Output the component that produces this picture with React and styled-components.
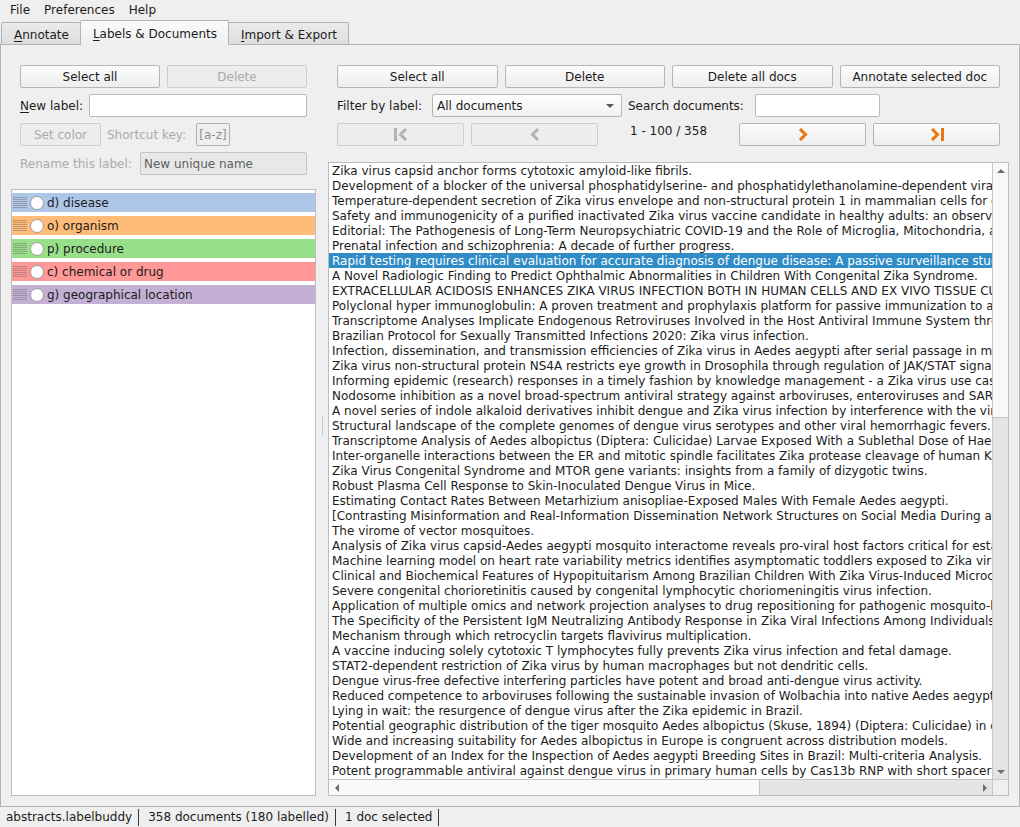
import React from "react";
import styled, { createGlobalStyle, css } from "styled-components";

const GlobalStyle = createGlobalStyle`
  html, body { margin: 0; padding: 0; width: 1020px; height: 827px; overflow: hidden; background: #efefef; }
  #root { width: 1020px; height: 827px; }
  *, *::before, *::after { box-sizing: border-box; }
`;

const Window = styled.div`
  width: 1020px;
  height: 827px;
  display: flex;
  flex-direction: column;
  font-family: "DejaVu Sans", "Liberation Sans", sans-serif;
  font-size: 12px;
  line-height: 15px;
  color: #1c1c1c;
  background: #efefef;
`;

const MenuBar = styled.div`
  height: 20px;
  display: flex;
  align-items: flex-start;
  padding-left: 3px;
`;

const MenuItem = styled.div`
  padding: 1px 7px 0;
  line-height: 18px;
`;

const TabBar = styled.div`
  height: 24px;
  display: flex;
  align-items: flex-end;
  padding-left: 1px;
`;

const Tab = styled.div`
  height: 22px;
  padding: 3px 11px 0 12px;
  display: flex;
  align-items: center;
  border: 1px solid #b3b3b3;
  border-bottom: none;
  border-radius: 2px 2px 0 0;
  background: linear-gradient(#eaeaea, #dedede);
  white-space: nowrap;
  & + & { margin-left: -1px; }
  ${(p) =>
    p.$active &&
    css`
      height: 25px;
      margin-bottom: -1px;
      padding-top: 2px;
      background: linear-gradient(#fbfbfb, #efefef);
      position: relative;
      z-index: 1;
    `}
`;

const Mnemonic = styled.span`
  text-decoration: underline;
  text-underline-offset: 2px;
`;

const Pane = styled.div`
  height: 763px;
  border: 1px solid #b3b3b3;
  display: flex;
  padding: 11px 10px 10px 10px;
  background: #efefef;
`;

const LeftColumn = styled.div`
  width: 305px;
  display: flex;
  flex-direction: column;
`;

const RightColumn = styled.div`
  flex: 1;
  min-width: 0;
  display: flex;
  flex-direction: column;
`;

const Splitter = styled.div`
  width: 12px;
  display: flex;
  align-items: center;
  justify-content: center;
`;

const SplitterDots = styled.div`
  width: 1px;
  height: 20px;
  margin-left: 1px;
  background: repeating-linear-gradient(#a8a8a8 0 1px, transparent 1px 2px);
`;

const Controls = styled.div`
  padding: 9px;
  display: flex;
  flex-direction: column;
  gap: 6px;
`;

const Row = styled.div`
  height: 23px;
  display: flex;
  align-items: center;
  gap: 6px;
`;

const GridRow = styled.div`
  height: 23px;
  display: grid;
  grid-template-columns: repeat(${(p) => p.$cols}, 1fr);
  gap: 7px;
`;

const Button = styled.button`
  height: 23px;
  margin: 0;
  padding: 1px 8px 0;
  font: inherit;
  color: ${(p) => (p.disabled ? "#a9a9a9" : "#1c1c1c")};
  border: 1px solid ${(p) => (p.disabled ? "#cdcdcd" : "#b6b6b6")};
  border-radius: 2px;
  background: ${(p) => (p.disabled ? "#ededed" : "linear-gradient(#fbfbfb, #eeeeee)")};
  display: flex;
  align-items: center;
  justify-content: center;
  white-space: nowrap;
  width: ${(p) => (p.$w ? `${p.$w}px` : "auto")};
`;

const IconButton = styled(Button)`
  padding-top: 0;
`;

const Label = styled.span`
  flex: none;
  white-space: nowrap;
  padding-top: 1px;
  width: ${(p) => (p.$w ? `${p.$w}px` : "auto")};
  color: ${(p) => (p.$dim ? "#ababab" : "#1c1c1c")};
`;

const Input = styled.div`
  height: 23px;
  flex: ${(p) => (p.$w ? "none" : "1")};
  width: ${(p) => (p.$w ? `${p.$w}px` : "auto")};
  border: 1px solid ${(p) => (p.$disabled ? "#c4c4c4" : "#b9b9b9")};
  border-radius: 2px;
  background: ${(p) => (p.$disabled ? "#e8e8e8" : "#ffffff")};
  color: ${(p) => (p.$disabled ? "#5e5e5e" : "#1c1c1c")};
  padding: 1px 3px 0;
  display: flex;
  align-items: center;
  white-space: nowrap;
  overflow: hidden;
`;

const KeyBox = styled.div`
  height: 23px;
  width: 34px;
  flex: none;
  border: 1px solid #b0b0b0;
  border-radius: 2px;
  background: #efefef;
  color: #8e8e8e;
  padding-top: 1px;
  display: flex;
  align-items: center;
  justify-content: center;
`;

const Combo = styled.div`
  height: 23px;
  width: 190px;
  flex: none;
  border: 1px solid #b6b6b6;
  border-radius: 2px;
  background: linear-gradient(#fdfdfd, #f1f1f1);
  padding: 1px 7px 0 4px;
  display: flex;
  align-items: center;
  justify-content: space-between;
`;

const ComboArrow = styled.span`
  width: 0;
  height: 0;
  border-left: 4px solid transparent;
  border-right: 4px solid transparent;
  border-top: 4px solid #5a5a5a;
`;

const PageInfo = styled.div`
  text-align: center;
  align-self: start;
  padding-top: 1px;
`;

const LabelList = styled.div`
  margin-top: 5px;
  flex: 1;
  background: #ffffff;
  border: 1px solid #bdbdbd;
  padding-top: 3px;
  display: flex;
  flex-direction: column;
  gap: 4px;
`;

const LabelItem = styled.div`
  height: 19px;
  display: flex;
  align-items: center;
  background: ${(p) => p.$color};
  padding-left: 1px;
`;

const Handle = styled.svg`
  flex: none;
  width: 14px;
  height: 11px;
  display: block;
`;

const Radio = styled.span`
  flex: none;
  width: 14px;
  height: 14px;
  margin-left: 3px;
  border-radius: 50%;
  border: 1px solid #9c9c9c;
  background: #ffffff;
`;

const LabelText = styled.span`
  margin-left: 3px;
  padding-top: 1px;
  white-space: nowrap;
`;

const DocList = styled.div`
  margin-top: 7px;
  flex: 1;
  min-height: 0;
  border: 1px solid #bdbdbd;
  background: #ffffff;
  display: grid;
  grid-template-columns: minmax(0, 1fr) 16px;
  grid-template-rows: minmax(0, 1fr) 16px;
  overflow: hidden;
`;

const Viewport = styled.div`
  overflow: hidden;
  min-width: 0;
`;

const DocRow = styled.div`
  height: 15px;
  line-height: 16px;
  padding-left: 3px;
  white-space: nowrap;
  overflow: hidden;
  ${(p) =>
    p.$selected &&
    css`
      background: #308cc6;
      color: #ffffff;
    `}
`;

const VScroll = styled.div`
  border-left: 1px solid #c6c6c6;
  background: #e4e4e4;
  display: flex;
  flex-direction: column;
`;

const HScroll = styled.div`
  border-top: 1px solid #c6c6c6;
  background: #e4e4e4;
  display: flex;
`;

const ArrowBtn = styled.div`
  flex: none;
  width: ${(p) => (p.$h ? "15px" : "100%")};
  height: ${(p) => (p.$h ? "100%" : "15px")};
  background: ${(p) => (p.$light ? "#f9f9f9" : "transparent")};
  display: flex;
  align-items: center;
  justify-content: center;
`;

const Thumb = styled.div`
  background: #f9f9f9;
  border-color: #c4c4c4;
  border-style: solid;
  border-width: ${(p) => (p.$h ? "0 1px 0 0" : "0 0 1px 0")};
  ${(p) => (p.$h ? `width: ${p.$size}px; height: 100%;` : `height: ${p.$size}px; width: 100%;`)}
`;

const Spacer = styled.div`
  flex: 1;
`;

const Corner = styled.div`
  border-top: 1px solid #c6c6c6;
  border-left: 1px solid #c6c6c6;
  background: #efefef;
`;

const StatusBar = styled.div`
  height: 20px;
  display: flex;
  align-items: center;
  padding-left: 5px;
  gap: 8px;
`;

const StatusItem = styled.div`
  padding: 1px 6px 1px 1px;
  border-right: 1px solid #3a3a3a;
  white-space: nowrap;
  line-height: 15px;
`;

const Tri = ({ dir, color = "#6e6e6e" }) => {
  const pts = {
    up: "0,5 4,1 8,5",
    down: "0,1 4,5 8,1",
    left: "5,0 1,4 5,8",
    right: "1,0 5,4 1,8",
  }[dir];
  const vert = dir === "up" || dir === "down";
  return (
    <svg width={vert ? 8 : 6} height={vert ? 6 : 8} viewBox={vert ? "0 0 8 6" : "0 0 6 8"}>
      <polygon points={pts} fill={color} />
    </svg>
  );
};

const NavIcon = ({ kind, enabled }) => {
  const c = enabled ? "#e8770e" : "#b3b3b3";
  const sw = 3;
  if (kind === "first")
    return (
      <svg width="14" height="13" viewBox="0 0 14 13">
        <rect x="0" y="0" width="3" height="13" fill={c} />
        <polyline points="12,1 6.5,6.5 12,12" fill="none" stroke={c} strokeWidth={sw} />
      </svg>
    );
  if (kind === "prev")
    return (
      <svg width="10" height="13" viewBox="0 0 10 13">
        <polyline points="8,1 2.5,6.5 8,12" fill="none" stroke={c} strokeWidth={sw} />
      </svg>
    );
  if (kind === "next")
    return (
      <svg width="10" height="13" viewBox="0 0 10 13">
        <polyline points="2,1 7.5,6.5 2,12" fill="none" stroke={c} strokeWidth={sw} />
      </svg>
    );
  return (
    <svg width="14" height="13" viewBox="0 0 14 13">
      <polyline points="2,1 7.5,6.5 2,12" fill="none" stroke={c} strokeWidth={sw} />
      <rect x="11" y="0" width="3" height="13" fill={c} />
    </svg>
  );
};

const DragHandle = () => (
  <Handle viewBox="0 0 14 11" shapeRendering="crispEdges">
    {[0, 2, 4, 6, 8, 10].map((y) => (
      <rect key={y} x="0" y={y} width="14" height="1" fill="rgba(95,95,95,0.4)" />
    ))}
  </Handle>
);

const labels = [
  { text: "d) disease", color: "#aec7e8" },
  { text: "o) organism", color: "#ffbb78" },
  { text: "p) procedure", color: "#98df8a" },
  { text: "c) chemical or drug", color: "#ff9896" },
  { text: "g) geographical location", color: "#c5b0d5" },
];

const docs = [
  "Zika virus capsid anchor forms cytotoxic amyloid-like fibrils.",
  "Development of a blocker of the universal phosphatidylserine- and phosphatidylethanolamine-dependent viral entry mechanism.",
  "Temperature-dependent secretion of Zika virus envelope and non-structural protein 1 in mammalian cells for diagnostic purposes.",
  "Safety and immunogenicity of a purified inactivated Zika virus vaccine candidate in healthy adults: an observer-blind, randomised, placebo-controlled trial.",
  "Editorial: The Pathogenesis of Long-Term Neuropsychiatric COVID-19 and the Role of Microglia, Mitochondria, and Persistent Neuroinflammation.",
  "Prenatal infection and schizophrenia: A decade of further progress.",
  "Rapid testing requires clinical evaluation for accurate diagnosis of dengue disease: A passive surveillance study in Southern Malaysia.",
  "A Novel Radiologic Finding to Predict Ophthalmic Abnormalities in Children With Congenital Zika Syndrome.",
  "EXTRACELLULAR ACIDOSIS ENHANCES ZIKA VIRUS INFECTION BOTH IN HUMAN CELLS AND EX VIVO TISSUE CULTURES FROM FEMALE REPRODUCTIVE TRACT.",
  "Polyclonal hyper immunoglobulin: A proven treatment and prophylaxis platform for passive immunization to address existing and emerging diseases.",
  "Transcriptome Analyses Implicate Endogenous Retroviruses Involved in the Host Antiviral Immune System through the Interferon Pathway.",
  "Brazilian Protocol for Sexually Transmitted Infections 2020: Zika virus infection.",
  "Infection, dissemination, and transmission efficiencies of Zika virus in Aedes aegypti after serial passage in mosquito or mammalian cell lines.",
  "Zika virus non-structural protein NS4A restricts eye growth in Drosophila through regulation of JAK/STAT signaling.",
  "Informing epidemic (research) responses in a timely fashion by knowledge management - a Zika virus use case.",
  "Nodosome inhibition as a novel broad-spectrum antiviral strategy against arboviruses, enteroviruses and SARS-CoV-2.",
  "A novel series of indole alkaloid derivatives inhibit dengue and Zika virus infection by interference with the viral replication complex.",
  "Structural landscape of the complete genomes of dengue virus serotypes and other viral hemorrhagic fevers.",
  "Transcriptome Analysis of Aedes albopictus (Diptera: Culicidae) Larvae Exposed With a Sublethal Dose of Haedoxan A.",
  "Inter-organelle interactions between the ER and mitotic spindle facilitates Zika protease cleavage of human Kinesin-5 and results in mitotic defects.",
  "Zika Virus Congenital Syndrome and MTOR gene variants: insights from a family of dizygotic twins.",
  "Robust Plasma Cell Response to Skin-Inoculated Dengue Virus in Mice.",
  "Estimating Contact Rates Between Metarhizium anisopliae-Exposed Males With Female Aedes aegypti.",
  "[Contrasting Misinformation and Real-Information Dissemination Network Structures on Social Media During a Health Emergency].",
  "The virome of vector mosquitoes.",
  "Analysis of Zika virus capsid-Aedes aegypti mosquito interactome reveals pro-viral host factors critical for establishing infection.",
  "Machine learning model on heart rate variability metrics identifies asymptomatic toddlers exposed to Zika virus during pregnancy.",
  "Clinical and Biochemical Features of Hypopituitarism Among Brazilian Children With Zika Virus-Induced Microcephaly.",
  "Severe congenital chorioretinitis caused by congenital lymphocytic choriomeningitis virus infection.",
  "Application of multiple omics and network projection analyses to drug repositioning for pathogenic mosquito-borne viruses.",
  "The Specificity of the Persistent IgM Neutralizing Antibody Response in Zika Viral Infections Among Individuals With Prior Dengue Virus Exposure.",
  "Mechanism through which retrocyclin targets flavivirus multiplication.",
  "A vaccine inducing solely cytotoxic T lymphocytes fully prevents Zika virus infection and fetal damage.",
  "STAT2-dependent restriction of Zika virus by human macrophages but not dendritic cells.",
  "Dengue virus-free defective interfering particles have potent and broad anti-dengue virus activity.",
  "Reduced competence to arboviruses following the sustainable invasion of Wolbachia into native Aedes aegypti from Southeastern Brazil.",
  "Lying in wait: the resurgence of dengue virus after the Zika epidemic in Brazil.",
  "Potential geographic distribution of the tiger mosquito Aedes albopictus (Skuse, 1894) (Diptera: Culicidae) in current and future conditions.",
  "Wide and increasing suitability for Aedes albopictus in Europe is congruent across distribution models.",
  "Development of an Index for the Inspection of Aedes aegypti Breeding Sites in Brazil: Multi-criteria Analysis.",
  "Potent programmable antiviral against dengue virus in primary human cells by Cas13b RNP with short spacer and delivery by virus-like particle.",
  "Identification of antibodies targeting the dengue virus envelope in children with symptomatic infection.",
];

export default function App() {
  return (
    <Window>
      <GlobalStyle />
      <MenuBar>
        <MenuItem>File</MenuItem>
        <MenuItem>Preferences</MenuItem>
        <MenuItem>Help</MenuItem>
      </MenuBar>
      <TabBar>
        <Tab>
          <span>
            <Mnemonic>A</Mnemonic>nnotate
          </span>
        </Tab>
        <Tab $active>
          <span>
            <Mnemonic>L</Mnemonic>abels &amp; Documents
          </span>
        </Tab>
        <Tab>
          <span>
            <Mnemonic>I</Mnemonic>mport &amp; Export
          </span>
        </Tab>
      </TabBar>
      <Pane>
        <LeftColumn>
          <Controls>
            <GridRow $cols={2}>
              <Button>Select all</Button>
              <Button disabled>Delete</Button>
            </GridRow>
            <Row>
              <Label $w={63}>
                <Mnemonic>N</Mnemonic>ew label:
              </Label>
              <Input />
            </Row>
            <Row>
              <Button disabled $w={81}>
                Set color
              </Button>
              <Label $dim $w={83}>
                Shortcut key:
              </Label>
              <KeyBox>[a-z]</KeyBox>
            </Row>
            <Row>
              <Label $dim $w={114}>
                Rename this label:
              </Label>
              <Input $disabled>New unique name</Input>
            </Row>
          </Controls>
          <LabelList>
            {labels.map((l) => (
              <LabelItem key={l.text} $color={l.color}>
                <DragHandle />
                <Radio />
                <LabelText>{l.text}</LabelText>
              </LabelItem>
            ))}
          </LabelList>
        </LeftColumn>
        <Splitter>
          <SplitterDots />
        </Splitter>
        <RightColumn>
          <Controls>
            <GridRow $cols={4}>
              <Button>Select all</Button>
              <Button>Delete</Button>
              <Button>Delete all docs</Button>
              <Button>Annotate selected doc</Button>
            </GridRow>
            <Row>
              <Label $w={89}>Filter by label:</Label>
              <Combo>
                <span>All documents</span>
                <ComboArrow />
              </Combo>
              <Label $w={121}>Search documents:</Label>
              <Input $w={125} />
            </Row>
            <GridRow $cols={5}>
              <IconButton disabled>
                <NavIcon kind="first" />
              </IconButton>
              <IconButton disabled>
                <NavIcon kind="prev" />
              </IconButton>
              <PageInfo>1 - 100 / 358</PageInfo>
              <IconButton>
                <NavIcon kind="next" enabled />
              </IconButton>
              <IconButton>
                <NavIcon kind="last" enabled />
              </IconButton>
            </GridRow>
          </Controls>
          <DocList>
            <Viewport>
              {docs.map((d, i) => (
                <DocRow key={i} $selected={i === 6}>
                  {d}
                </DocRow>
              ))}
            </Viewport>
            <VScroll>
              <ArrowBtn $light>
                <Tri dir="up" />
              </ArrowBtn>
              <Thumb $size={240} />
              <Spacer />
              <ArrowBtn>
                <Tri dir="down" />
              </ArrowBtn>
            </VScroll>
            <HScroll>
              <ArrowBtn $h $light>
                <Tri dir="left" />
              </ArrowBtn>
              <Thumb $h $size={416} />
              <Spacer />
              <ArrowBtn $h>
                <Tri dir="right" />
              </ArrowBtn>
            </HScroll>
            <Corner />
          </DocList>
        </RightColumn>
      </Pane>
      <StatusBar>
        <StatusItem>abstracts.labelbuddy</StatusItem>
        <StatusItem>358 documents (180 labelled)</StatusItem>
        <StatusItem>1 doc selected</StatusItem>
      </StatusBar>
    </Window>
  );
}
